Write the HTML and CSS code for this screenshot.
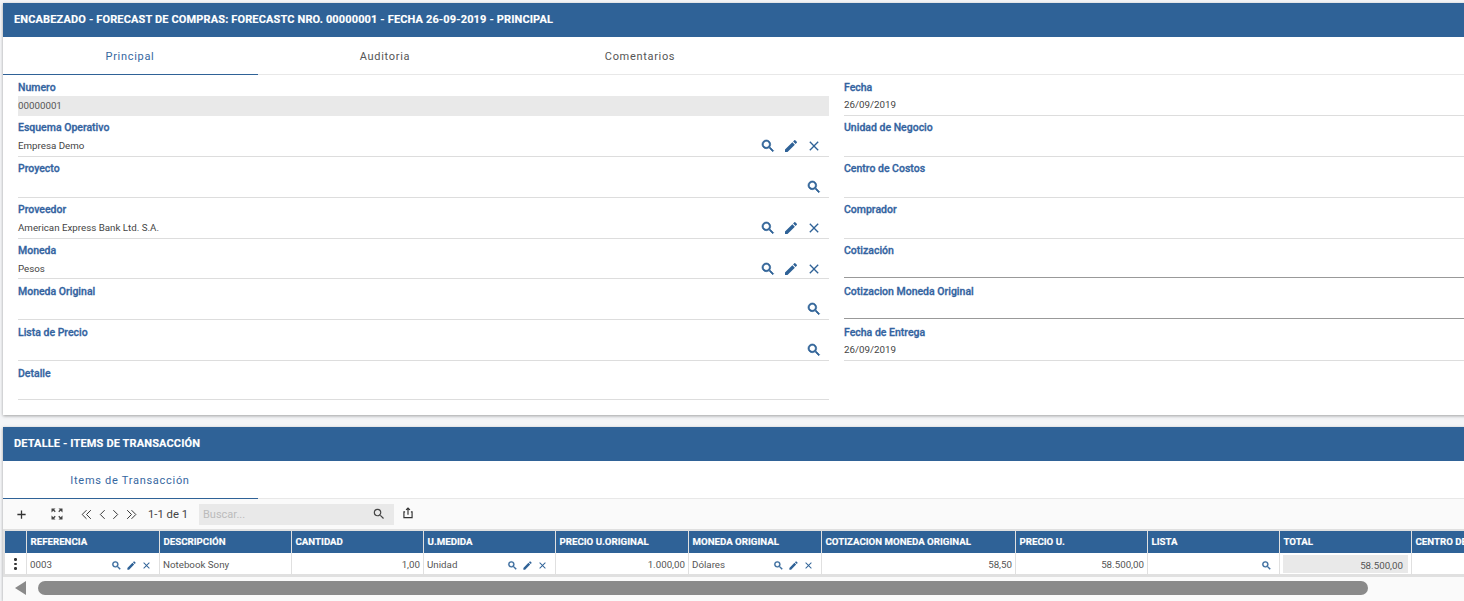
FILE: index.html
```html
<!DOCTYPE html>
<html lang="es">
<head>
<meta charset="utf-8">
<title>Forecast de compras</title>
<link rel="stylesheet" href="styles.css">
</head>
<body>
<svg class="defs" width="0" height="0" aria-hidden="true">
  <symbol id="i-search" viewBox="0 0 24 24"><path d="M15.5 14h-.79l-.28-.27A6.47 6.47 0 0 0 16 9.5 6.5 6.5 0 1 0 9.5 16c1.61 0 3.09-.59 4.23-1.57l.27.28v.79l5 4.99L20.49 19l-4.99-5zm-6 0C7.01 14 5 11.99 5 9.5S7.01 5 9.5 5 14 7.01 14 9.5 11.99 14 9.5 14z" stroke="currentColor" stroke-width="1"/></symbol>
  <symbol id="i-edit" viewBox="0 0 24 24"><path d="M3 17.25V21h3.75L17.81 9.94l-3.75-3.75L3 17.25zM20.71 7.04a1 1 0 0 0 0-1.41l-2.34-2.34a1 1 0 0 0-1.41 0l-1.83 1.83 3.75 3.75 1.83-1.83z"/></symbol>
  <symbol id="i-close" viewBox="0 0 24 24"><path d="M19 6.41 17.59 5 12 10.59 6.41 5 5 6.41 10.59 12 5 17.59 6.41 19 12 13.41 17.59 19 19 17.59 13.41 12z"/></symbol>
</svg>

<section class="card card-main">
  <h2 class="bar">ENCABEZADO - FORECAST DE COMPRAS: FORECASTC NRO. 00000001 - FECHA 26-09-2019 - PRINCIPAL</h2>
  <nav class="tabs">
    <a class="tab active">Principal</a>
    <a class="tab">Auditoria</a>
    <a class="tab">Comentarios</a>
  </nav>
  <div class="form">
    <div class="col">
      <div class="field first"><label>Numero</label><div class="value locked">00000001</div></div>
      <div class="field"><label>Esquema Operativo</label><div class="value"><span>Empresa Demo</span><span class="acts"><svg><use href="#i-search"/></svg><svg><use href="#i-edit"/></svg><svg><use href="#i-close"/></svg></span></div></div>
      <div class="field"><label>Proyecto</label><div class="value"><span></span><span class="acts"><svg><use href="#i-search"/></svg></span></div></div>
      <div class="field"><label>Proveedor</label><div class="value"><span>American Express Bank Ltd. S.A.</span><span class="acts"><svg><use href="#i-search"/></svg><svg><use href="#i-edit"/></svg><svg><use href="#i-close"/></svg></span></div></div>
      <div class="field field-short"><label>Moneda</label><div class="value v20 flush"><span>Pesos</span><span class="acts"><svg><use href="#i-search"/></svg><svg><use href="#i-edit"/></svg><svg><use href="#i-close"/></svg></span></div></div>
      <div class="field after"><label>Moneda Original</label><div class="value v20"><span></span><span class="acts"><svg><use href="#i-search"/></svg></span></div></div>
      <div class="field after"><label>Lista de Precio</label><div class="value v20"><span></span><span class="acts"><svg><use href="#i-search"/></svg></span></div></div>
      <div class="field after"><label>Detalle</label><div class="value v18"><span></span></div></div>
    </div>
    <div class="col col-right">
      <div class="field first"><label>Fecha</label><div class="value date">26/09/2019</div></div>
      <div class="field"><label>Unidad de Negocio</label><div class="value"></div></div>
      <div class="field"><label>Centro de Costos</label><div class="value"></div></div>
      <div class="field"><label>Comprador</label><div class="value"></div></div>
      <div class="field field-short"><label>Cotización</label><div class="value v19 dark"></div></div>
      <div class="field after"><label>Cotizacion Moneda Original</label><div class="value v19 dark"></div></div>
      <div class="field after"><label>Fecha de Entrega</label><div class="value v20 raised">26/09/2019</div></div>
    </div>
  </div>
</section>

<section class="card card-detail">
  <h2 class="bar">DETALLE - ITEMS DE TRANSACCIÓN</h2>
  <nav class="tabs tabs-detail">
    <a class="tab active">Items de Transacción</a>
  </nav>
  <div class="toolbar">
    <button class="tool add" aria-label="Agregar"><svg viewBox="0 0 12 12"><path d="M6 1.5v9M1.5 6h9"/></svg></button>
    <button class="tool expand" aria-label="Expandir"><svg viewBox="0 0 12 12"><path d="M.5 4.5v-4h4l-1.3 1.3 1.5 1.5-.9.9-1.5-1.5zM11.5 4.5v-4h-4l1.3 1.3-1.5 1.5.9.9 1.5-1.5zM.5 7.5v4h4l-1.3-1.3 1.5-1.5-.9-.9-1.5 1.5zM11.5 7.5v4h-4l1.3-1.3-1.5-1.5.9-.9 1.5 1.5z"/></svg></button>
    <button class="tool nav nav-first" aria-label="Primero"><svg viewBox="0 0 12 12"><path d="M6 2 2 6l4 4M10 2 6 6l4 4"/></svg></button>
    <button class="tool nav" aria-label="Anterior"><svg viewBox="0 0 12 12"><path d="M8 2 4 6l4 4"/></svg></button>
    <button class="tool nav" aria-label="Siguiente"><svg viewBox="0 0 12 12"><path d="m4 2 4 4-4 4"/></svg></button>
    <button class="tool nav nav-last" aria-label="Último"><svg viewBox="0 0 12 12"><path d="m2 2 4 4-4 4M6 2l4 4-4 4"/></svg></button>
    <span class="pager">1-1 de 1</span>
    <div class="search"><span>Buscar...</span><svg viewBox="0 0 24 24"><path d="M15.5 14h-.79l-.28-.27A6.47 6.47 0 0 0 16 9.5 6.5 6.5 0 1 0 9.5 16c1.61 0 3.09-.59 4.23-1.57l.27.28v.79l5 4.99L20.49 19l-4.99-5zm-6 0C7.01 14 5 11.99 5 9.5S7.01 5 9.5 5 14 7.01 14 9.5 11.99 14 9.5 14z"/></svg></div>
    <button class="tool share" aria-label="Exportar"><svg viewBox="0 0 24 24"><path d="M12 2 8 6l1.4 1.4L11 5.8V15h2V5.8l1.6 1.6L16 6l-4-4zM7 9H4v12h16V9h-3v2h1v8H6v-8h1V9z"/></svg></button>
  </div>
  <div class="grid">
    <div class="head blank"></div>
    <div class="head">REFERENCIA</div>
    <div class="head">DESCRIPCIÓN</div>
    <div class="head">CANTIDAD</div>
    <div class="head">U.MEDIDA</div>
    <div class="head">PRECIO U.ORIGINAL</div>
    <div class="head">MONEDA ORIGINAL</div>
    <div class="head">COTIZACION MONEDA ORIGINAL</div>
    <div class="head">PRECIO U.</div>
    <div class="head">LISTA</div>
    <div class="head">TOTAL</div>
    <div class="head">CENTRO DE COSTOS</div>

    <div class="cell dots"><i></i><i></i><i></i></div>
    <div class="cell split"><span>0003</span><span class="mini"><svg><use href="#i-search"/></svg><svg><use href="#i-edit"/></svg><svg><use href="#i-close"/></svg></span></div>
    <div class="cell">Notebook Sony</div>
    <div class="cell num">1,00</div>
    <div class="cell split"><span>Unidad</span><span class="mini"><svg><use href="#i-search"/></svg><svg><use href="#i-edit"/></svg><svg><use href="#i-close"/></svg></span></div>
    <div class="cell num">1.000,00</div>
    <div class="cell split"><span>Dólares</span><span class="mini"><svg><use href="#i-search"/></svg><svg><use href="#i-edit"/></svg><svg><use href="#i-close"/></svg></span></div>
    <div class="cell num">58,50</div>
    <div class="cell num">58.500,00</div>
    <div class="cell split"><span></span><span class="mini"><svg><use href="#i-search"/></svg></span></div>
    <div class="cell total"><span>58.500,00</span></div>
    <div class="cell"></div>
  </div>
  <div class="hscroll">
    <svg class="arrow" viewBox="0 0 11 14"><path d="M11 0v14L0 7z"/></svg>
    <div class="thumb"></div>
  </div>
</section>
</body>
</html>
```
FILE: styles.css
```css
html, body { margin: 0; padding: 0; height: 601px; overflow: hidden; }
body {
  background: #f4f5f7;
  font-family: Roboto, "Liberation Sans", sans-serif;
  color: #444;
  padding: 3px 0 0 3px;
  box-sizing: border-box;
  width: 1464px;
}
.defs { position: absolute; }
.card {
  width: 1480px;
  background: #fff;
  box-shadow: 0 1px 3px rgba(0,0,0,.35);
}
.card-main { height: 412px; }
.card-detail { margin-top: 12px; height: 174px; }
.bar {
  margin: 0;
  height: 34px;
  line-height: 33px;
  padding-left: 11px;
  background: #2f6297;
  color: #fff;
  font-size: 11px;
  font-weight: 700;
  letter-spacing: .14px;
  -webkit-text-stroke: .15px #fff;
}
.tabs {
  display: flex;
  height: 38px;
  border-bottom: 1px solid #e8e8e8;
  box-sizing: border-box;
}
.tab {
  width: 255px;
  padding-right: 1px;
  text-align: center;
  font-size: 11px;
  line-height: 39px;
  letter-spacing: .68px;
  color: #555;
  box-sizing: border-box;
  height: 38px;
}
.tab.active {
  color: #36679f;
  border-bottom: 1px solid #2f6297;
}
.tabs-detail .tab { letter-spacing: .72px; }
.form {
  display: flex;
  gap: 15px;
  padding: 5px 0 0 15px;
}
.col { width: 811px; flex: none; }
.col-right { width: 640px; }
.field { height: 41px; box-sizing: border-box; padding-top: 4px; }
.field.first { height: 36px; padding-top: 0; }
.field.field-short { height: 40px; }
.field.after { padding-top: 5px; }
.field label {
  display: block;
  height: 16px;
  line-height: 16px;
  font-size: 10.5px;
  font-weight: 500;
  color: #33639f;
  -webkit-text-stroke: .3px #33639f;
}
.value {
  display: flex;
  align-items: center;
  justify-content: space-between;
  height: 21px;
  padding-bottom: 1px;
  box-sizing: border-box;
  border-bottom: 1px solid #ddd;
  font-size: 9.75px;
  color: #444;
}
.value.v20 { height: 20px; }
.value.v19 { height: 19px; }
.value.v18 { height: 18px; }
.value.flush { padding-bottom: 0; }
.value.raised { padding-bottom: 2px; }
.value.dark { border-bottom-color: #999; }
.value.locked {
  height: 20px;
  background: #e9e9e9;
  border-bottom: 0;
  color: #555;
}
.value.date { height: 20px; padding-bottom: 2px; }
.acts { display: flex; gap: 7px; color: #2f6297; fill: currentColor; padding-right: 7px; }
.acts svg { width: 16px; height: 16px; fill: currentColor; }
.tabs-detail { height: 38px; }
.toolbar {
  display: flex;
  align-items: center;
  height: 30px;
  background: #fafafa;
  box-sizing: border-box;
  padding-left: 11px;
  color: #444;
}
.tool {
  border: 0;
  background: none;
  padding: 0;
  display: flex;
  align-items: center;
  justify-content: center;
}
.tool svg { fill: none; stroke: #333; stroke-width: .9; width: 13px; height: 13px; }
.add { width: 14px; margin-right: 23px; }
.add svg { stroke-width: 1.4; width: 11px; height: 11px; }
.expand { width: 12px; margin-right: 17px; }
.expand svg { fill: #444; stroke: none; width: 12px; height: 12px; }
.nav { width: 13px; }
.nav-first { margin-right: 3px; }
.nav-last { margin-left: 3px; }
.pager { font-size: 11.25px; color: #444; margin-left: 10px; width: 51px; }
.search {
  width: 195px;
  height: 21px;
  background: #e9e9e9;
  display: flex;
  align-items: center;
  justify-content: space-between;
  padding: 0 8px 0 4px;
  box-sizing: border-box;
  font-size: 11px;
  color: #bbb;
}
.search svg { width: 14px; height: 14px; fill: #444; }
.share { margin-left: 7px; margin-top: -2px; }
.share svg { fill: #333; stroke: none; width: 14px; height: 14px; }
.grid {
  display: grid;
  grid-template-columns: 21px 132px 131px 131px 131px 132px 132px 193px 131px 131px 131px 120px;
  column-gap: 1px;
  background: #e0e0e0;
  border-top: 2px solid #e0e0e0;
  border-bottom: 3px solid #e0e0e0;
  padding-left: 2px;
  width: 1461px;
  box-sizing: border-box;
  overflow: hidden;
}
.head {
  background: #2f6297;
  color: #fff;
  font-size: 9.7px;
  font-weight: 700;
  -webkit-text-stroke: .15px #fff;
  height: 22px;
  line-height: 21px;
  padding-left: 3.5px;
  white-space: nowrap;
  overflow: hidden;
  border-bottom: 1px solid #fff;
  box-sizing: content-box;
}
.cell {
  background: #fff;
  height: 20px;
  line-height: 22px;
  font-size: 9.75px;
  color: #555;
  padding: 0 3px;
  box-sizing: border-box;
}
.head.blank { padding: 0; }
.split { display: flex; align-items: center; justify-content: space-between; padding-top: 2px; line-height: 18px; }
.num { text-align: right; }
.mini { display: flex; gap: 4px; padding-right: 4px; }
.mini svg { width: 11px; height: 11px; fill: #2f6297; color: #2f6297; }
.dots { display: flex; flex-direction: column; align-items: center; justify-content: center; gap: 2px; padding: 0; }
.dots i { width: 2.5px; height: 2.5px; border-radius: 50%; background: #333; }
.total { padding: 1px 3px; }
.total span { display: block; height: 18px; line-height: 22px; background: #e9e9e9; text-align: right; padding-right: 5px; }
.hscroll {
  display: flex;
  align-items: flex-start;
  height: 24px;
  background: #fafafa;
  padding: 4px 0 0 12px;
  box-sizing: border-box;
}
.arrow { width: 11px; height: 14px; fill: #8a8a8a; }
.thumb { width: 1330px; height: 14px; margin-left: 12px; border-radius: 7px; background: #8a8a8a; }
```
